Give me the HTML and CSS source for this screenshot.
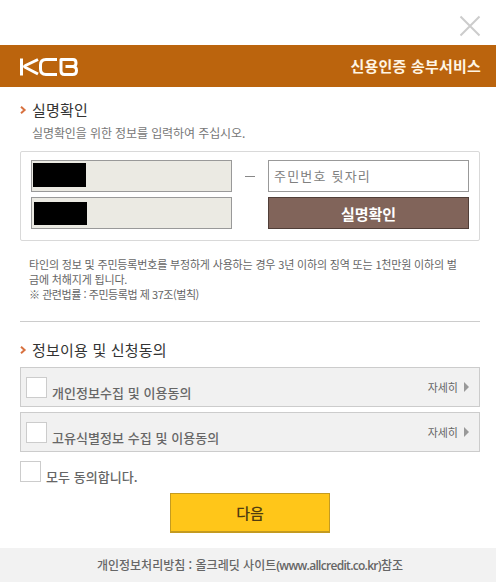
FILE: index.html
```html
<!DOCTYPE html>
<html lang="ko">

<head>
    <meta charset="UTF-8">
    <meta name="viewport" content="width=device-width, initial-scale=1.0">
    <title>신용인증 송부서비스</title>
    <link rel="stylesheet" href="styles.css">
</head>
<body>
    <div class="top">
        <button type="button" class="close" aria-label="닫기">
            <svg width="22" height="22" viewBox="0 0 22 22"><path d="M1.5 1.5l19 19M20.5 1.5l-19 19"/></svg>
        </button>
    </div>

    <header>
        <svg class="logo" width="58" height="18" viewBox="0 0 58 18" role="img" aria-label="KCB">
            <path d="M1.500 .5v17M18 1.500L5.500 7.500q-2 1 0 2L18 16M37 1.500H26q-5.500 0-5.500 5.500v4q0 5.500 5.500 5.500H37M45.500 8.500h7q4 0 4 4t-4 4h-8q-3.500 0-3.500-3.500V1.500h12q3 0 3 3.500t-3 3.500"/>
        </svg>
        <h1>신용인증 송부서비스</h1>
    </header>

    <main>
        <section class="verify">
            <h2><svg class="arrow" width="7" height="8" viewBox="0 0 7 8"><path d="M1 .8L4.600 4 1 7.200"/></svg>실명확인</h2>
            <p class="desc">실명확인을 위한 정보를 입력하여 주십시오.</p>
            <div class="form-box">
                <div class="field filled"><span class="mask"></span></div>
                <span class="dash"></span>
                <input type="text" class="field" placeholder="주민번호 뒷자리">
                <div class="field filled second"><span class="mask"></span></div>
                <span></span>
                <button type="button" class="confirm">실명확인</button>
            </div>
            <p class="notice">타인의 정보 및 주민등록번호를 부정하게 사용하는 경우 3년 이하의 징역 또는 1천만원 이하의 벌<br>금에 처해지게 됩니다.<br><span class="law">※ 관련법률 : 주민등록법 제 37조(벌칙)</span></p>
        </section>

        <section class="agree">
            <h2><svg class="arrow" width="7" height="8" viewBox="0 0 7 8"><path d="M1 .8L4.600 4 1 7.200"/></svg>정보이용 및 신청동의</h2>
            <div class="agree-row">
                <label><input type="checkbox"><span>개인정보수집 및 이용동의</span></label>
                <a href="#" class="more">자세히</a>
            </div>
            <div class="agree-row">
                <label><input type="checkbox"><span>고유식별정보 수집 및 이용동의</span></label>
                <a href="#" class="more">자세히</a>
            </div>
            <label class="agree-all"><input type="checkbox"><span>모두 동의합니다.</span></label>
        </section>

        <button type="button" class="next">다음</button>
    </main>

    <footer>
        <p>개인정보처리방침 : 올크레딧 사이트<span class="url">(www.allcredit.co.kr)</span>참조</p>
    </footer>
</body>

</html>
```
FILE: styles.css
```css
* {
    box-sizing: border-box;
}

body {
    margin: 0;
    background-color: #fff;
    color: #666;
    font-family: "Noto Sans CJK KR", sans-serif;
}

h1, h2, p {
    margin: 0;
}

button, input {
    font-family: inherit;
    margin: 0;
}

.top {
    display: flex;
    justify-content: flex-end;
    height: 45px;
    padding: 15px 15px 0 0;
}

.close {
    width: 22px;
    height: 22px;
    padding: 0;
    border: none;
    background: none;
}

.close svg {
    display: block;
    fill: none;
    stroke: #ccc;
    stroke-width: 2;
}

header {
    display: flex;
    justify-content: space-between;
    align-items: center;
    height: 42px;
    padding: 0 15px 0 20px;
    background-color: #bb640d;
}

.logo {
    margin-top: 2px;
    fill: none;
    stroke: #fff;
    stroke-width: 3;
    stroke-linejoin: round;
}

header h1 {
    color: #fff5e4;
    font-size: 15px;
    line-height: 42px;
    letter-spacing: 0.2px;
}

main {
    display: flex;
    flex-direction: column;
    padding: 0 16px 0 20px;
}

h2 {
    display: flex;
    align-items: center;
    color: #333;
    font-size: 15px;
    font-weight: 400;
    line-height: 20px;
    letter-spacing: 0.2px;
}

.arrow {
    width: 7px;
    margin-right: 5px;
    fill: none;
    stroke: #d8713f;
    stroke-width: 2;
}

.verify {
    height: 235px;
    padding-top: 13px;
    border-bottom: 1px solid #ccc;
}

.desc {
    padding-left: 12px;
    color: #777;
    font-size: 12px;
    line-height: 18px;
    letter-spacing: -0.1px;
    margin-top: 4px;
}

.form-box {
    display: grid;
    grid-template-columns: 201px 36px 201px;
    grid-template-rows: 32px 32px;
    row-gap: 5px;
    height: 90px;
    margin-top: 9px;
    padding: 8px 10px;
    border: 1px solid #d9d9d9;
    border-radius: 2px;
}

.field {
    width: 201px;
    height: 32px;
    padding: 0 5px 2px;
    border: 1px solid #999;
    border-radius: 0;
    background-color: #fff;
    font-size: 13px;
    letter-spacing: 1.2px;
}

.field::placeholder {
    color: #808080;
}

.filled {
    padding: 2px 1px;
    background-color: #ebeae3;
}

.mask {
    display: block;
    width: 53px;
    height: 24px;
    background-color: #000;
}

.second {
    padding: 4px 2px;
}

.second .mask {
    height: 23px;
}

.dash {
    width: 10px;
    height: 1px;
    margin: 16px 0 0 13px;
    background-color: #888;
}

.confirm {
    padding: 0;
    border: 1px solid #503e38;
    background-color: #81645a;
    color: #fff;
    font-size: 15px;
    font-weight: 700;
}

.notice {
    margin-top: 16px;
    padding-left: 9px;
    font-size: 11px;
    line-height: 15px;
    letter-spacing: -0.17px;
    white-space: nowrap;
}

.law {
    letter-spacing: -0.45px;
}

.agree {
    padding-top: 18px;
}

.agree h2 {
    margin-bottom: 7px;
}

.agree-row {
    display: flex;
    justify-content: space-between;
    height: 40px;
    margin-bottom: 5px;
    padding: 9px 10px 0 5px;
    border: 1px solid #ccc;
    background-color: #f1f1f1;
}

label {
    display: flex;
    color: #666;
    font-size: 13px;
    font-weight: 500;
    line-height: 20px;
    letter-spacing: 0.05px;
}

label span {
    padding: 6px 0 0 5px;
}

label input {
    appearance: none;
    width: 21px;
    height: 21px;
    border: 1px solid #ccc;
    background-color: #fff;
}

.more {
    display: flex;
    align-items: center;
    height: 20px;
    color: #666;
    font-size: 11px;
    text-decoration: none;
}

.more::after {
    content: "";
    margin-left: 6px;
    border-left: 5px solid #999;
    border-top: 5px solid transparent;
    border-bottom: 5px solid transparent;
}

.agree-all {
    margin-top: 9px;
    height: 32px;
}

.next {
    align-self: center;
    width: 160px;
    height: 40px;
    padding: 0;
    border: 1px solid #c49b20;
    border-bottom-width: 2px;
    background-color: #ffc619;
    color: #503c10;
    font-size: 15px;
    font-weight: 500;
}

footer {
    height: 34px;
    margin-top: 15px;
    padding-left: 4px;
    background-color: #f2f2f2;
    text-align: center;
    font-size: 12px;
    font-weight: 500;
    line-height: 33px;
}

.url {
    font-family: "Open Sans", sans-serif;
    font-weight: 600;
    letter-spacing: -0.7px;
}
```
